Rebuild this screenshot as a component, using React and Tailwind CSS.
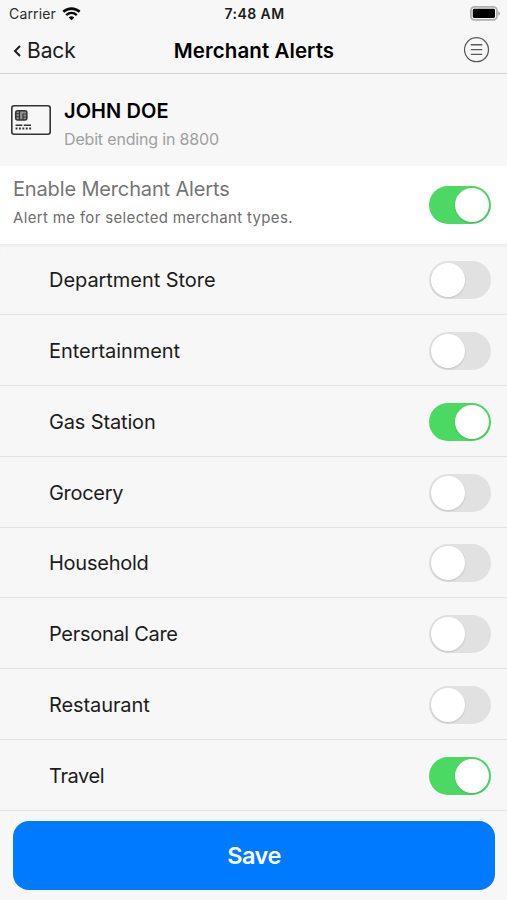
import React, { useState } from 'react';

const merchantTypes = [
  { id: 'department', label: 'Department Store', tracking: 'tracking-[-0.05px]', enabled: false },
  { id: 'entertainment', label: 'Entertainment', tracking: 'tracking-[-0.05px]', enabled: false },
  { id: 'gas', label: 'Gas Station', tracking: 'tracking-[-0.15px]', enabled: true },
  { id: 'grocery', label: 'Grocery', tracking: 'tracking-[-0.3px]', enabled: false },
  { id: 'household', label: 'Household', tracking: 'tracking-[-0.25px]', enabled: false },
  { id: 'personal', label: 'Personal Care', tracking: 'tracking-[-0.3px]', enabled: false },
  { id: 'restaurant', label: 'Restaurant', tracking: 'tracking-[-0.1px]', enabled: false },
  { id: 'travel', label: 'Travel', tracking: 'tracking-[-0.4px]', enabled: true },
];

const WifiIcon = () => (
  <svg className="w-[19px] h-[14px]" viewBox="0 0 19 14" fill="none">
    <path d="M1.3 4.8C6 0.5 13 0.5 17.7 4.8" stroke="#0a0a0a" strokeWidth="2.6" />
    <path d="M4.2 8.1C7.3 5.3 11.7 5.3 14.8 8.1" stroke="#0a0a0a" strokeWidth="2.4" />
    <path d="M9.5 13.2L6.7 10.4C8.4 9 10.6 9 12.3 10.4Z" fill="#0a0a0a" />
  </svg>
);

const BatteryIcon = () => (
  <svg className="w-[31px] h-[15px]" viewBox="0 0 31 15" fill="none">
    <rect x="0.9" y="0.9" width="26" height="13" rx="3.6" stroke="#b0b0b0" strokeWidth="1.8" />
    <rect x="2.8" y="2.8" width="22.2" height="9.2" rx="1.4" fill="#000" />
    <path d="M28.2 5.2C30.6 6 30.6 8.8 28.2 9.6Z" fill="#a5a5a5" />
  </svg>
);

const MenuIcon = () => (
  <svg className="w-[26px] h-[26px]" viewBox="0 0 26 26" fill="none" stroke="#5a5a5a">
    <circle cx="12.5" cy="12.7" r="12" strokeWidth="1.3" />
    <path d="M6.8 7.8H18.2M6.8 12.6H18.2M6.8 17.4H18.2" strokeWidth="1.4" />
  </svg>
);

const CardIcon = () => (
  <svg className="w-[40px] h-[30px]" viewBox="0 0 40 30" fill="none" stroke="#333">
    <rect x="0.8" y="0.8" width="38.4" height="28.4" rx="2.4" strokeWidth="1.6" />
    <rect x="4.7" y="5.7" width="11.2" height="9.2" rx="2" strokeWidth="1.5" fill="#909090" />
    <path d="M4.7 8.8H8.5M4.7 11.8H8.5M8.5 6V15M12 15V9H15.9M12 12H15.9" strokeWidth="1.1" />
    <path d="M4.6 20.3H11.4M12.8 20.3H20" strokeWidth="1.5" />
    <path d="M4.6 23.5H20.5" strokeWidth="1.9" strokeDasharray="1.9 1.5" />
  </svg>
);

const Toggle = ({ checked, onChange, label }) => (
  <button
    type="button"
    role="switch"
    aria-checked={checked}
    aria-label={label}
    onClick={onChange}
    className={`flex items-center w-[62px] h-[38px] rounded-full px-[2px] shrink-0 ${
      checked ? 'bg-[#4bd964] justify-end' : 'bg-[#e1e1e1] justify-start'
    }`}
  >
    <span className="w-[34px] h-[34px] rounded-full bg-white shadow-[0_1px_2px_rgba(0,0,0,0.14)]" />
  </button>
);

const App = () => {
  const [alertsOn, setAlertsOn] = useState(true);
  const [types, setTypes] = useState(merchantTypes);

  const toggleType = (id) => {
    setTypes((prev) => prev.map((t) => (t.id === id ? { ...t, enabled: !t.enabled } : t)));
  };

  return (
    <div className="flex flex-col w-[507px] h-[900px] overflow-hidden bg-[#f7f7f7] font-['Inter',sans-serif] text-black">
      {/* Status bar */}
      <div className="grid grid-cols-3 items-center h-[27px] pl-[9px] pr-[6px]">
        <div className="flex items-center gap-[6px] text-[#2a2a2a]">
          <span className="text-[14px] tracking-[0.15px]">Carrier</span>
          <WifiIcon />
        </div>
        <span className="text-center text-[14px] font-semibold text-[#1c1c1c] tracking-[0.45px] pr-[1px]">7:48 AM</span>
        <div className="flex justify-end">
          <BatteryIcon />
        </div>
      </div>

      {/* Nav bar */}
      <div className="grid grid-cols-[1fr_auto_1fr] items-center h-[47px] pl-[13px] pr-[17px] border-b border-[#d4d4d4]">
        <button type="button" className="flex items-center gap-[6px] pt-px text-[#1c1c1c]">
          <svg className="w-[8px] h-[12px]" viewBox="0 0 8 12" fill="none" stroke="currentColor" strokeWidth="2">
            <path d="M7 1L2 6L7 11" />
          </svg>
          <span className="text-[21px] leading-6 tracking-[-0.1px]">Back</span>
        </button>
        <h1 className="pt-px pl-[5px] text-[20.5px] leading-6 font-semibold tracking-[0.08px]">Merchant Alerts</h1>
        <div className="flex justify-end">
          <MenuIcon />
        </div>
      </div>

      {/* Card holder */}
      <div className="flex items-start h-[92px] pl-[11px] gap-[13px] pt-[24px]">
        <div className="pt-[7px]">
          <CardIcon />
        </div>
        <div>
          <div className="text-[20px] leading-[26px] font-semibold tracking-[0.08px]">JOHN DOE</div>
          <div className="pt-[3px] text-[16px] leading-[24px] text-[#a0a0a0] tracking-[-0.17px]">
            Debit ending in 8800
          </div>
        </div>
      </div>

      <div className="flex items-center justify-between h-[78px] pl-[13px] pr-[16px] bg-white">
        <div className="pb-[4px]">
          <div className="text-[20px] leading-[29px] text-[#757575] tracking-[-0.15px]">Enable Merchant Alerts</div>
          <div className="text-[15px] leading-[27px] text-[#6e6e6e] tracking-[0.34px]">
            Alert me for selected merchant types.
          </div>
        </div>
        <Toggle checked={alertsOn} onChange={() => setAlertsOn(!alertsOn)} label="Enable Merchant Alerts" />
      </div>

      <ul className="grid grid-rows-8 h-[567px] shadow-[inset_0_3px_3px_-1px_#ececec]">
        {types.map((type) => (
          <li
            key={type.id}
            className="flex items-center justify-between pt-[2px] pl-[49px] pr-[16px] border-b border-[#e3e3e3]"
          >
            <span className={`text-[20px] leading-6 text-[#1c1c1c] ${type.tracking}`}>{type.label}</span>
            <Toggle checked={type.enabled} onChange={() => toggleType(type.id)} label={type.label} />
          </li>
        ))}
      </ul>

      <div className="pt-[10px] pl-[13px] pr-[12px]">
        <button
          type="button"
          className="w-full h-[69px] rounded-[16px] bg-[#007aff] text-white text-[23.5px] font-semibold tracking-[-0.5px]"
        >
          Save
        </button>
      </div>
    </div>
  );
};

export default App;
